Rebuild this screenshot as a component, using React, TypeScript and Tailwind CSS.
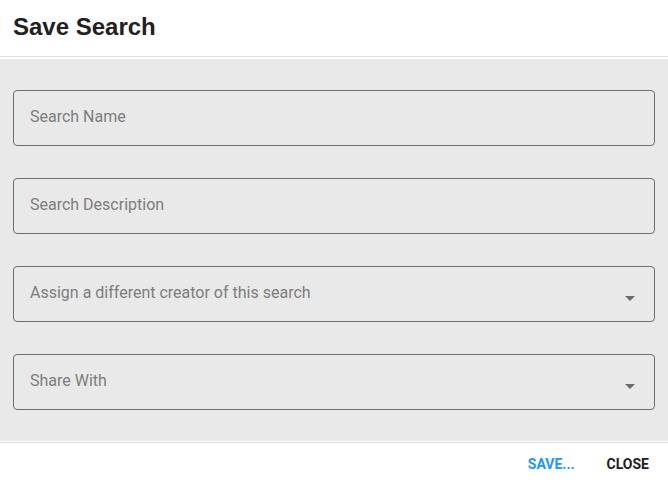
import React from "react";

function Field({ label, select }: { label: string; select?: boolean }) {
  return (
    <div className="relative h-[56px] rounded-[4px] border border-[#6f6f6f] flex items-center pl-[16px] pr-[20px]">
      <span className="text-[16px] leading-[20px] text-[#7d7d7d] -mt-[3px]" style={{ fontFamily: "Roboto, 'Liberation Sans', sans-serif" }}>
        {label}
      </span>
      {select && (
        <svg className="absolute right-[19px] top-[29px]" width="10" height="5" viewBox="0 0 10 5">
          <path d="M0 0 L10 0 L5 5 Z" fill="#6b6b6b" />
        </svg>
      )}
    </div>
  );
}

export default function App() {
  return (
    <div className="w-[668px] h-[486px] bg-white flex flex-col" style={{ fontFamily: "Roboto, 'Liberation Sans', sans-serif" }}>
      <div className="h-[57px] shrink-0 flex items-center px-[13px] border-b border-[#dddddd]">
        <h1 className="text-[24px] font-bold text-[#212121] -mt-[2px]" style={{ fontFamily: "'Liberation Sans', Arial, sans-serif" }}>
          Save Search
        </h1>
      </div>
      <div className="mt-[2px] h-[382px] shrink-0 bg-[#e9e9e9] px-[13px] pt-[31px] flex flex-col gap-[32px]">
        <Field label="Search Name" />
        <Field label="Search Description" />
        <Field label="Assign a different creator of this search" select />
        <Field label="Share With" select />
      </div>
      <div className="mt-[1px] border-t border-[#dddddd] flex-1 flex items-center justify-end pr-[19px] gap-[32px]">
        <button className="text-[14px] font-bold text-[#2196f3] -mt-[1px]">SAVE...</button>
        <button className="text-[14px] font-bold text-[#212121] -mt-[1px]">CLOSE</button>
      </div>
    </div>
  );
}
